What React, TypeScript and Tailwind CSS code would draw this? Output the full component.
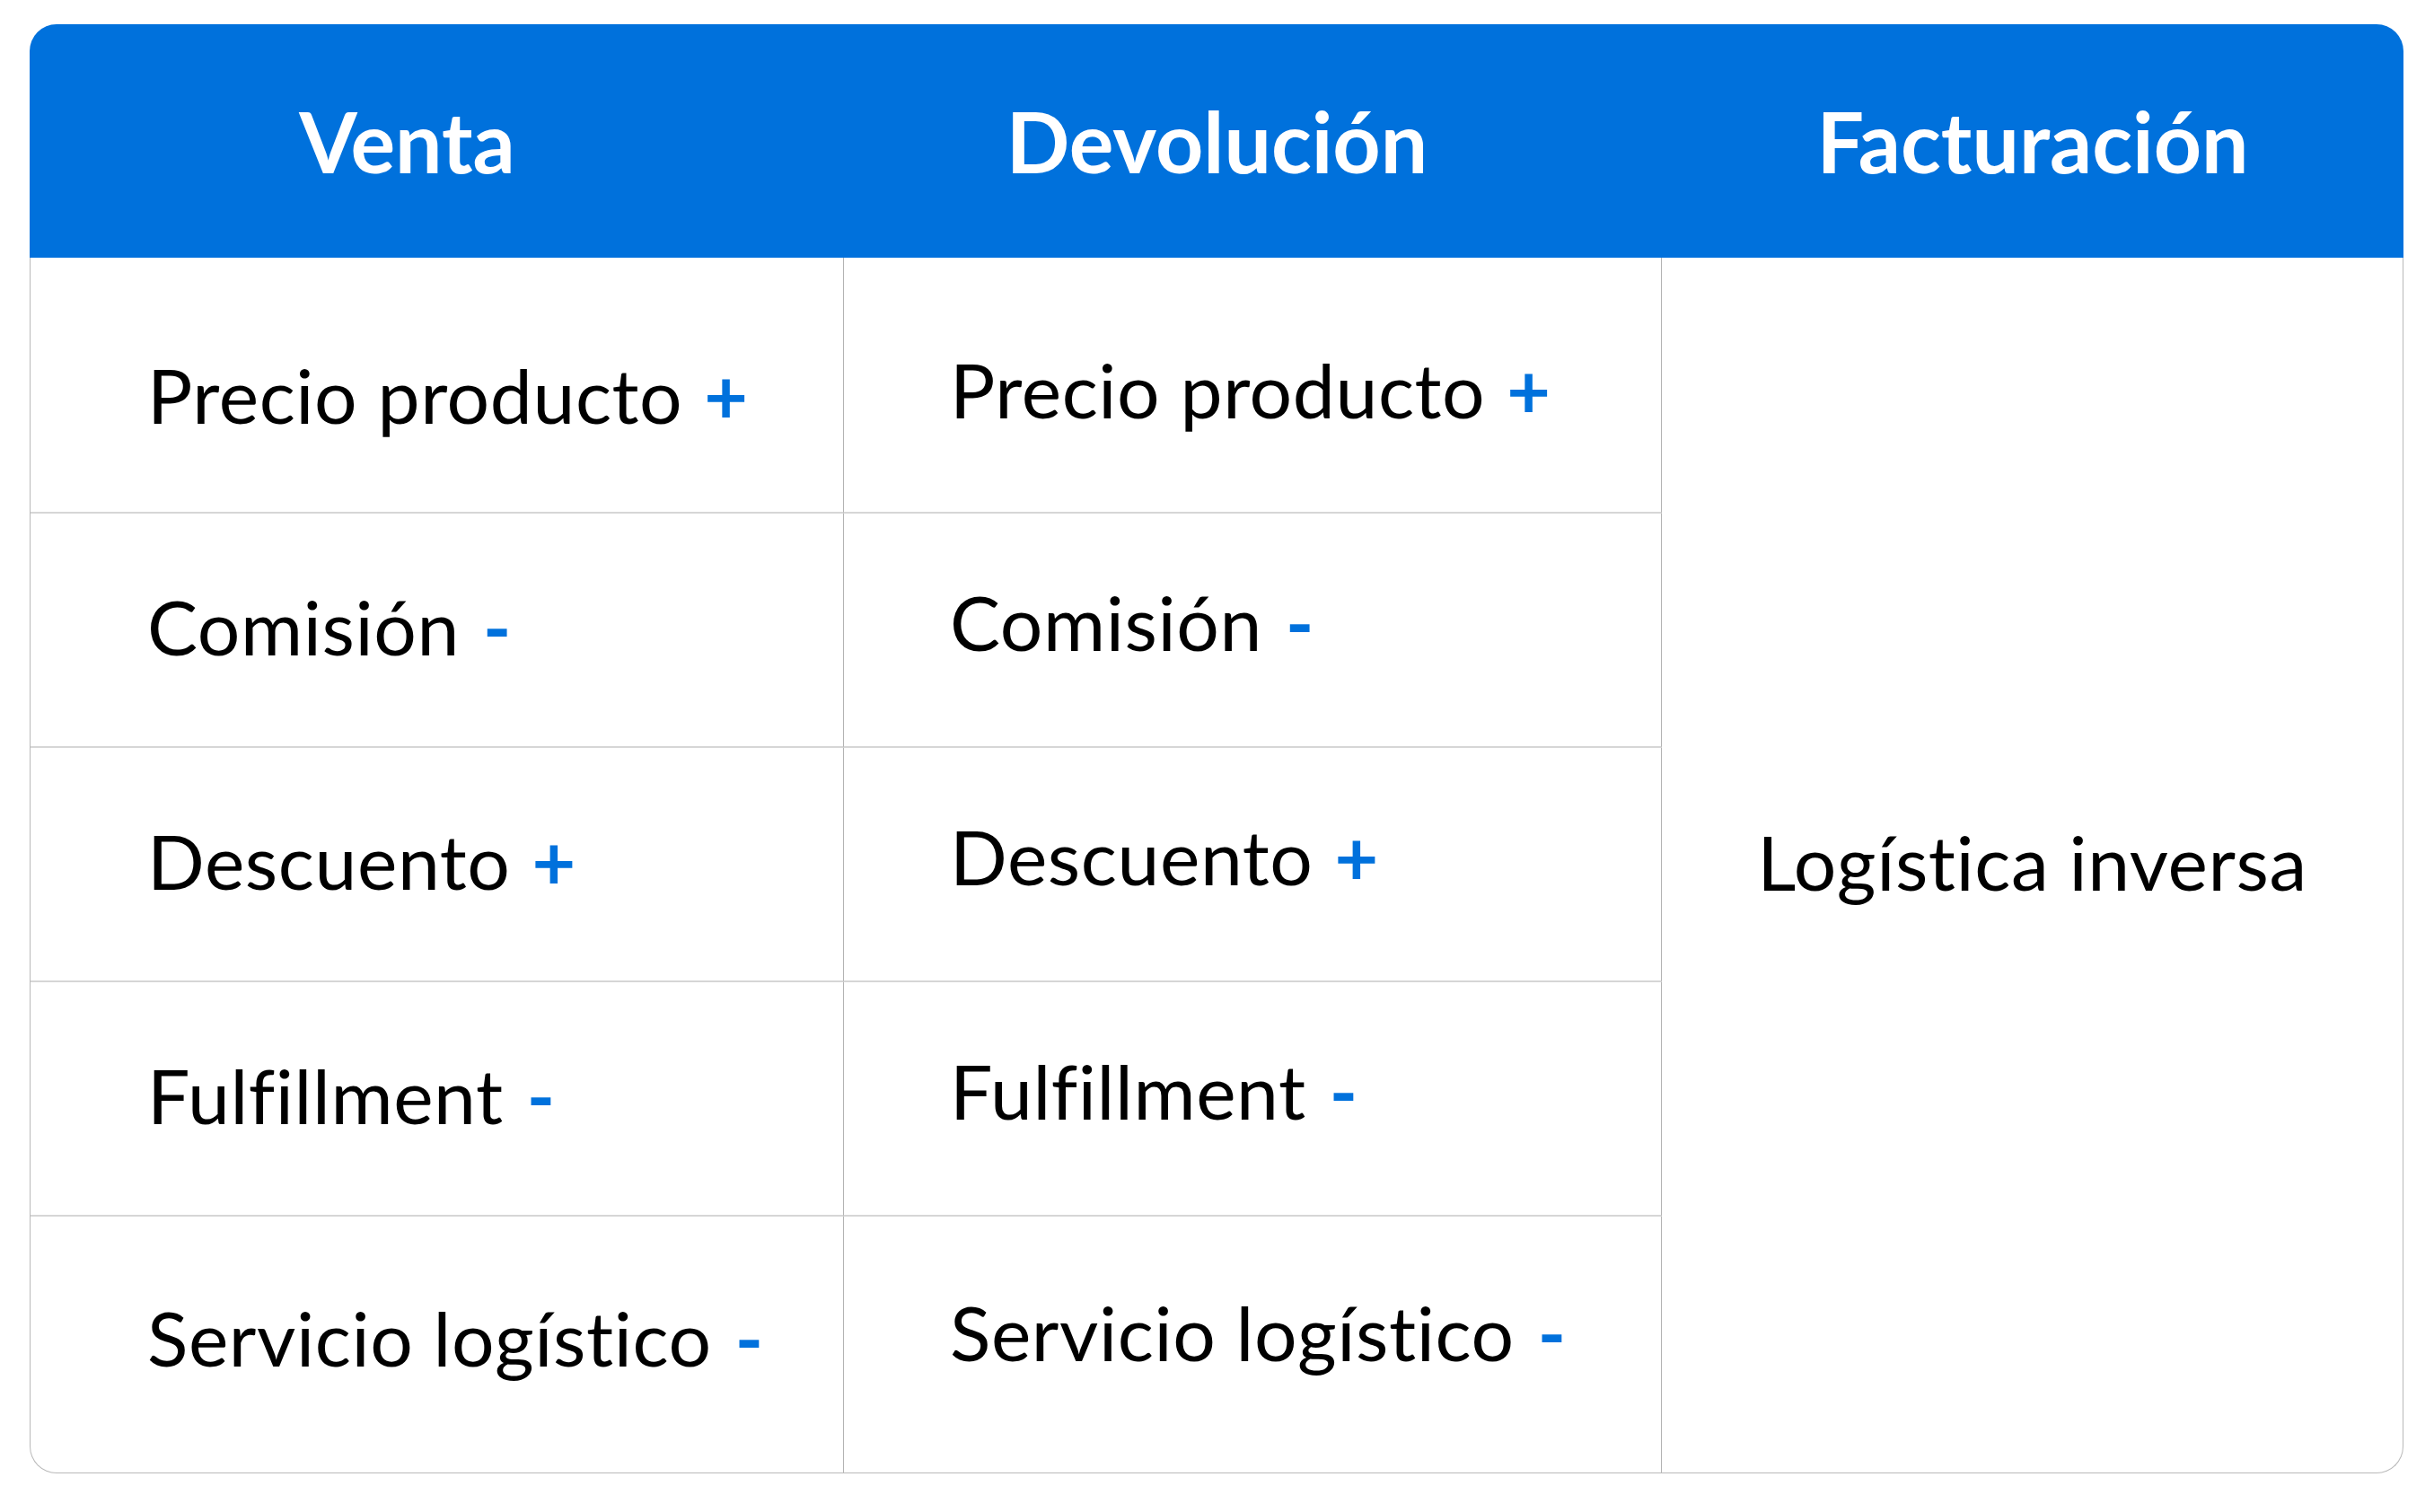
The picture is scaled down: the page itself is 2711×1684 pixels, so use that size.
const headers = [
  { label: "Venta", pad: "pr-[66px]" },
  { label: "Devolución", pad: "pr-[80px]" },
  { label: "Facturación", pad: "" },
];

const rows = [
  { label: "Precio producto", sign: "+", c1: "pt-[22px]", c2: "pt-[10px]" },
  { label: "Comisión", sign: "-", c1: "pb-[7px]", c2: "pb-[18px]" },
  { label: "Descuento", sign: "+", c1: "pb-[7px]", c2: "pb-[18px]" },
  { label: "Fulfillment", sign: "-", c1: "pb-[7px]", c2: "pb-[18px]" },
  { label: "Servicio logístico", sign: "-", c1: "pb-[15px]", c2: "pb-[27px]" },
];

function Item({ label, sign }: { label: string; sign: string }) {
  return (
    <span className="whitespace-nowrap leading-none">
      {label}
      <span className={sign === "+" ? "ml-[24px] font-bold text-[#0071dc]" : "ml-[26px] font-bold text-[#0071dc]"}>
        {sign}
      </span>
    </span>
  );
}

export default function App() {
  return (
    <div className="min-h-screen bg-white pl-[33px] pt-[27px] font-['Lato','Liberation_Sans',sans-serif] text-black [font-variant-ligatures:none]">
      <div className="w-[2644px]">
        {/* header */}
        <div className="grid h-[260px] grid-cols-[907px_911px_826px] rounded-t-[30px] bg-[#0071dc]">
          {headers.map((h) => (
            <div key={h.label} className={`flex items-center justify-center ${h.pad}`}>
              <span className="text-[93px] font-bold leading-none text-white">{h.label}</span>
            </div>
          ))}
        </div>

        {/* body */}
        <div className="grid grid-cols-[906px_911px_825px] grid-rows-[285px_261px_261px_261px_285px] rounded-b-[30px] border-x border-b border-[#b9b9b9] text-[84px] tracking-[0.6px]">
          {rows.map((r, i) => {
            const last = i === rows.length - 1;
            return [
              <div
                key={r.label + "-v"}
                style={{ gridRow: i + 1, gridColumn: 1 }}
                className={`flex items-center border-r border-[#b3b3b3] pl-[130px] ${r.c1} ${last ? "" : "border-b-2 border-b-[#d6d6d6]"}`}
              >
                <Item label={r.label} sign={r.sign} />
              </div>,
              <div
                key={r.label + "-d"}
                style={{ gridRow: i + 1, gridColumn: 2 }}
                className={`flex items-center border-r border-[#b3b3b3] pl-[118px] ${r.c2} ${last ? "" : "border-b-2 border-b-[#d6d6d6]"}`}
              >
                <Item label={r.label} sign={r.sign} />
              </div>,
            ];
          })}
          <div className="col-start-3 row-span-5 row-start-1 flex items-center justify-center pb-[8px]">
            <span className="leading-none">Logística inversa</span>
          </div>
        </div>
      </div>
    </div>
  );
}
